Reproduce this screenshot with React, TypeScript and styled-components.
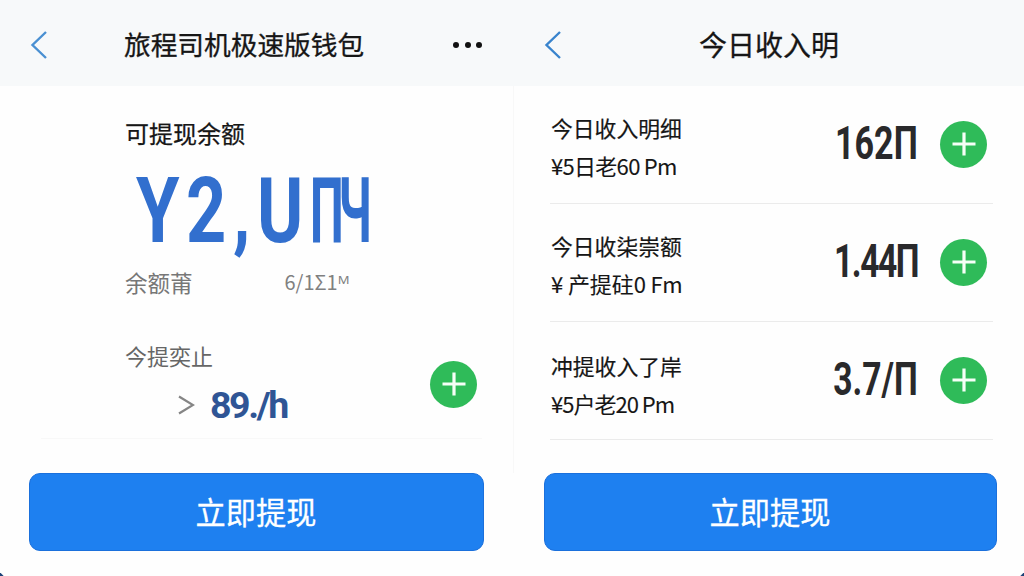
import React from 'react';
import styled, { createGlobalStyle } from 'styled-components';

const GlobalStyle = createGlobalStyle`
  * {
    box-sizing: border-box;
  }

  body {
    margin: 0;
    background: #fefefe;
    overflow: hidden;
    font-family: 'Noto Sans CJK SC', 'Noto Sans', sans-serif;
    color: #161616;
  }
`;

const Screen = styled.div`
  position: relative;
  width: 1024px;
  height: 576px;
  display: grid;
  grid-template-columns: 514px 510px;
  overflow: hidden;
`;

const Panel = styled.section`
  display: flex;
  flex-direction: column;
  min-width: 0;

  & + & > main {
    border-left: 1px solid #f8f8f8;
    margin-left: -1px;
  }
`;

const Header = styled.header<{ $columns: string }>`
  display: grid;
  grid-template-columns: ${props => props.$columns};
  align-items: center;
  height: 86px;
  padding-left: 30px;
  background: #f7f9fa;
`;

const BackButton = styled.button`
  display: flex;
  padding: 4px 0 0;
  border: none;
  background: none;
`;

const Title = styled.h1<{ $size: number }>`
  margin: 0;
  padding-top: 2px;
  font-size: ${props => props.$size}px;
  line-height: 40px;
  font-weight: 400;
  white-space: nowrap;
  -webkit-text-stroke: 0.3px currentColor;
`;

const MoreButton = styled.button`
  display: flex;
  gap: 5.6px;
  padding: 4px 0 0;
  border: none;
  background: none;
`;

const Dot = styled.span`
  width: 6px;
  height: 6px;
  border-radius: 50%;
  background: #111;
`;

const Body = styled.main`
  height: 387px;
`;

const Balance = styled.div`
  display: flex;
  flex-direction: column;
  height: 353px;
  margin: 0 32px 0 41px;
  padding: 29px 0 0 84px;
  border-bottom: 1px solid #f8f8f8;
`;

const BalanceLabel = styled.div`
  height: 36px;
  font-size: 24px;
  line-height: 36px;
  -webkit-text-stroke: 0.25px currentColor;
`;

const BalanceValue = styled.div`
  height: 104px;
  margin-left: 11px;
  font-family: Roboto, 'Noto Sans', sans-serif;
  font-size: 90px;
  line-height: 122px;
  font-weight: 700;
  letter-spacing: 8.5px;
  color: #326fce;
  white-space: nowrap;
  transform: scaleX(0.78);
  transform-origin: left;
`;

const BalanceTail = styled.span`
  display: inline-block;
  letter-spacing: -10px;
  transform: scaleX(0.68);
  transform-origin: left;
`;

const MetaRow = styled.div`
  display: flex;
  gap: 92px;
  height: 34px;
  margin-top: 10px;
  font-size: 22.5px;
  line-height: 34px;
  color: #777;
`;

const MetaCode = styled.span`
  font-size: 20px;
  color: #808080;
`;

const TodayRow = styled.div`
  display: flex;
  justify-content: space-between;
  align-items: center;
  height: 98px;
  margin-top: 36px;
  padding-right: 5px;
`;

const TodayLabel = styled.div`
  height: 42px;
  font-size: 22px;
  line-height: 34px;
  color: #666;
`;

const TodayValue = styled.div`
  display: flex;
  align-items: center;
  height: 50px;
  padding-left: 53px;
  gap: 15px;
  font-family: Roboto, sans-serif;
  font-size: 37.5px;
  font-weight: 700;
  letter-spacing: -2.4px;
  color: #2f5595;
`;

const AddCircle = styled.button`
  display: flex;
  align-items: center;
  justify-content: center;
  width: 47px;
  height: 47px;
  padding: 0;
  border: none;
  border-radius: 50%;
  background: #2fbb59;
  flex-shrink: 0;
`;

const IncomeList = styled.div`
  display: flex;
  flex-direction: column;
  margin: 0 31px 0 36px;
`;

const IncomeInfo = styled.div`
  flex: 1;
  padding-top: 5px;
`;

const IncomeRow = styled.div`
  display: flex;
  align-items: center;
  height: 118px;
  padding: 0 6px 1px 1px;
  border-bottom: 1px solid #ebebeb;

  &:last-child ${IncomeInfo} {
    padding-top: 9px;
  }
`;

const IncomeTitle = styled.div`
  font-size: 21.8px;
  line-height: 38px;
  -webkit-text-stroke: 0.2px currentColor;
`;

const IncomeDetail = styled.div<{ $spacing: number }>`
  font-size: 22px;
  line-height: 37px;
  letter-spacing: ${props => props.$spacing}px;
  white-space: pre;
  -webkit-text-stroke: 0.1px currentColor;
`;

const Amount = styled.div<{ $scale: number; $spacing: number }>`
  margin-right: 22px;
  padding-bottom: 2px;
  font-family: Roboto, sans-serif;
  font-size: 46px;
  line-height: 50px;
  font-weight: 700;
  letter-spacing: ${props => props.$spacing}px;
  color: #29292b;
  white-space: nowrap;
  transform: scaleX(${props => props.$scale});
  transform-origin: right;
`;

const WithdrawButton = styled.button<{ $side: 'left' | 'right' }>`
  height: 78px;
  margin: ${props => (props.$side === 'left' ? '0 30px 0 29px' : '0 27px 0 30px')};
  padding: 0 1px 2px 0;
  border: 1px solid #1b70dc;
  border-radius: 11px;
  background: #1e80f0;
  color: #fff;
  font-family: inherit;
  font-size: 30.2px;
  line-height: 44px;
  -webkit-text-stroke: 0.3px currentColor;
`;

const Corner = styled.span<{ $side: 'left' | 'right' }>`
  position: absolute;
  bottom: -5px;
  ${props => props.$side}: -5px;
  width: 8px;
  height: 8px;
  background: #1c4277;
  transform: rotate(45deg);
`;

const incomes = [
  { title: '今日收入明细', detail: '¥5日老60 Pm', spacing: -0.7, amount: '162П', scale: 0.74, amountSpacing: 0 },
  { title: '今日收柒崇额', detail: '¥ 产提砫0 Fm', spacing: -0.1, amount: '1.44П', scale: 0.73, amountSpacing: -2 },
  { title: '冲提收入了岸', detail: '¥5户老20 Pm', spacing: -1, amount: '3.7/П', scale: 0.73, amountSpacing: 0 },
];

const BackIcon = ({ color }: { color: string }) => (
  <svg width="18" height="30" viewBox="0 0 18 30" fill="none">
    <path d="M16 2 2.5 15 16 28" stroke={color} strokeWidth="2.4" />
  </svg>
);

const AddButton = () => (
  <AddCircle>
    <svg width="24" height="24" viewBox="0 0 24 24" fill="none">
      <path d="M12 0.5v23M0.5 12h23" stroke="#f5fff7" strokeWidth="3.2" />
    </svg>
  </AddCircle>
);

const App: React.FC = () => (
  <>
    <GlobalStyle />
    <Screen>
      <Panel>
        <Header $columns="94px 329px 1fr">
          <BackButton>
            <BackIcon color="#4a90d2" />
          </BackButton>
          <Title $size={26.7}>旅程司机极速版钱包</Title>
          <MoreButton>
            <Dot />
            <Dot />
            <Dot />
          </MoreButton>
        </Header>
        <Body>
          <Balance>
            <BalanceLabel>可提现余额</BalanceLabel>
            <BalanceValue>
              Y2,U<BalanceTail>ПЧ</BalanceTail>
            </BalanceValue>
            <MetaRow>
              <span>余额莆</span>
              <MetaCode>6/1Σ1ᴹ</MetaCode>
            </MetaRow>
            <TodayRow>
              <div>
                <TodayLabel>今提奕止</TodayLabel>
                <TodayValue>
                  <svg width="17" height="20" viewBox="0 0 17 20" fill="none">
                    <path d="M1 1.5 15 10 1 18.5" stroke="#858585" strokeWidth="2.2" />
                  </svg>
                  <span>89./h</span>
                </TodayValue>
              </div>
              <AddButton />
            </TodayRow>
          </Balance>
        </Body>
        <WithdrawButton $side="left">立即提现</WithdrawButton>
      </Panel>

      <Panel>
        <Header $columns="155px 1fr">
          <BackButton>
            <BackIcon color="#3984cd" />
          </BackButton>
          <Title $size={28}>今日收入明</Title>
        </Header>
        <Body>
          <IncomeList>
            {incomes.map(item => (
              <IncomeRow key={item.amount}>
                <IncomeInfo>
                  <IncomeTitle>{item.title}</IncomeTitle>
                  <IncomeDetail $spacing={item.spacing}>{item.detail}</IncomeDetail>
                </IncomeInfo>
                <Amount $scale={item.scale} $spacing={item.amountSpacing}>
                  {item.amount}
                </Amount>
                <AddButton />
              </IncomeRow>
            ))}
          </IncomeList>
        </Body>
        <WithdrawButton $side="right">立即提现</WithdrawButton>
      </Panel>
      <Corner $side="left" />
      <Corner $side="right" />
    </Screen>
  </>
);

export default App;
